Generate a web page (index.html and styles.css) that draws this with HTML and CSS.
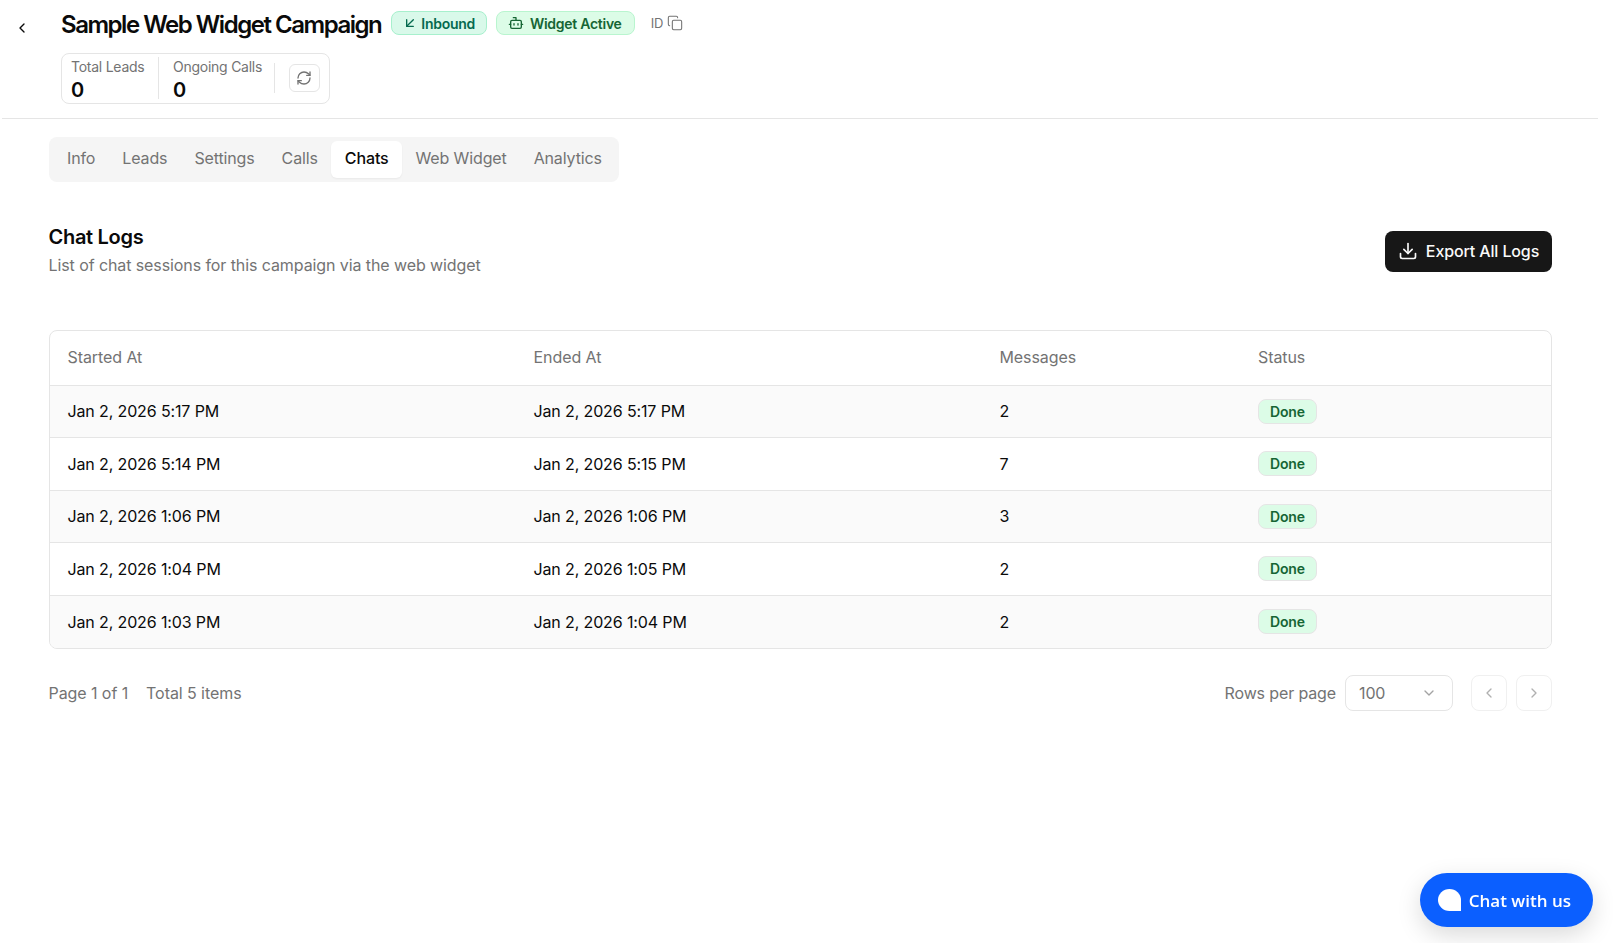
FILE: index.html
```html
<!DOCTYPE html>
<html lang="en">
<head>
  <meta charset="UTF-8">
  <meta name="viewport" content="width=device-width, initial-scale=1.0">
  <title>Sample Web Widget Campaign</title>
  <link rel="stylesheet" href="styles.css">
</head>
<body>
  <div class="page">
    <header class="topbar">
      <button class="back-btn" aria-label="Back">
        <svg width="16" height="16" viewBox="0 0 24 24" class="ico"><path d="m15 18-6-6 6-6"/></svg>
      </button>
      <div class="topbar-main">
        <div class="title-row">
          <h1>Sample Web Widget Campaign</h1>
          <span class="pill pill-teal">
            <svg width="16" height="16" viewBox="0 0 24 24" class="ico"><path d="M17 7 7 17"/><path d="M17 17H7V7"/></svg>
            Inbound
          </span>
          <span class="pill pill-green">
            <svg width="16" height="16" viewBox="0 0 24 24" class="ico"><path d="M12 8V4H8"/><rect x="4" y="8" width="16" height="12" rx="2"/><path d="M2 14h2"/><path d="M20 14h2"/><path d="M15 13v2"/><path d="M9 13v2"/></svg>
            Widget Active
          </span>
          <span class="id-copy">ID
            <svg width="16" height="16" viewBox="0 0 24 24" class="ico"><rect x="8" y="8" width="14" height="14" rx="2"/><path d="M4 16c-1.1 0-2-.9-2-2V4c0-1.1.9-2 2-2h10c1.1 0 2 .9 2 2"/></svg>
          </span>
        </div>
        <div class="stats">
          <div class="stat">
            <span class="stat-label">Total Leads</span>
            <span class="stat-value">0</span>
          </div>
          <div class="stat stat-second">
            <span class="stat-label">Ongoing Calls</span>
            <span class="stat-value">0</span>
          </div>
          <div class="stat-refresh">
            <button class="refresh-btn" aria-label="Refresh">
              <svg width="16" height="16" viewBox="0 0 24 24" class="ico"><path d="M3 12a9 9 0 0 1 9-9 9.75 9.75 0 0 1 6.74 2.74L21 8"/><path d="M21 3v5h-5"/><path d="M21 12a9 9 0 0 1-9 9 9.75 9.75 0 0 1-6.74-2.74L3 16"/><path d="M8 16H3v5"/></svg>
            </button>
          </div>
        </div>
      </div>
    </header>

    <main class="content">
      <nav class="tabs">
        <a class="tab">Info</a>
        <a class="tab">Leads</a>
        <a class="tab">Settings</a>
        <a class="tab">Calls</a>
        <a class="tab active">Chats</a>
        <a class="tab">Web Widget</a>
        <a class="tab">Analytics</a>
      </nav>

      <section class="section-head">
        <div>
          <h2>Chat Logs</h2>
          <p>List of chat sessions for this campaign via the web widget</p>
        </div>
        <button class="export-btn">
          <svg width="20" height="20" viewBox="0 0 24 24" class="ico"><path d="M12 15V3"/><path d="M21 15v4a2 2 0 0 1-2 2H5a2 2 0 0 1-2-2v-4"/><path d="m7 10 5 5 5-5"/></svg>
          Export All Logs
        </button>
      </section>

      <div class="table-wrap">
        <table class="logs">
          <colgroup>
            <col class="col-date"><col class="col-date"><col class="col-msg"><col>
          </colgroup>
          <thead>
            <tr><th>Started At</th><th>Ended At</th><th>Messages</th><th>Status</th></tr>
          </thead>
          <tbody>
            <tr><td>Jan 2, 2026 5:17 PM</td><td>Jan 2, 2026 5:17 PM</td><td>2</td><td><span class="done">Done</span></td></tr>
            <tr><td>Jan 2, 2026 5:14 PM</td><td>Jan 2, 2026 5:15 PM</td><td>7</td><td><span class="done">Done</span></td></tr>
            <tr><td>Jan 2, 2026 1:06 PM</td><td>Jan 2, 2026 1:06 PM</td><td>3</td><td><span class="done">Done</span></td></tr>
            <tr><td>Jan 2, 2026 1:04 PM</td><td>Jan 2, 2026 1:05 PM</td><td>2</td><td><span class="done">Done</span></td></tr>
            <tr><td>Jan 2, 2026 1:03 PM</td><td>Jan 2, 2026 1:04 PM</td><td>2</td><td><span class="done">Done</span></td></tr>
          </tbody>
        </table>
      </div>

      <div class="pager">
        <div class="pager-info">
          <span>Page 1 of 1</span>
          <span>Total 5 items</span>
        </div>
        <div class="pager-controls">
          <span class="rows-label">Rows per page</span>
          <div class="rows-select">
            <span>100</span>
            <svg width="16" height="16" viewBox="0 0 24 24" class="ico"><path d="m6 9 6 6 6-6"/></svg>
          </div>
          <div class="pager-btns">
            <button class="page-btn" aria-label="Previous"><svg width="16" height="16" viewBox="0 0 24 24" class="ico"><path d="m15 18-6-6 6-6"/></svg></button>
            <button class="page-btn" aria-label="Next"><svg width="16" height="16" viewBox="0 0 24 24" class="ico"><path d="m9 18 6-6-6-6"/></svg></button>
          </div>
        </div>
      </div>
    </main>
  </div>

  <button class="chat-launcher"><span class="chat-bubble"></span>Chat with us</button>
</body>
</html>
```

FILE: styles.css
```css
* {
  box-sizing: border-box;
}
body {
  margin: 0;
  background: #fff;
  color: #0a0a0a;
  font-family: Inter, 'Liberation Sans', sans-serif;
  font-size: 16px;
  letter-spacing: -0.13px;
}
button {
  font-family: inherit;
  letter-spacing: inherit;
  cursor: pointer;
}
.ico {
  fill: none;
  stroke: currentColor;
  stroke-width: 2;
  stroke-linecap: round;
  stroke-linejoin: round;
  flex-shrink: 0;
}
.page {
  margin: 0 15px 0 2px;
}
.topbar {
  display: flex;
  align-items: flex-start;
  height: 119px;
  padding-top: 9px;
  border-bottom: 1px solid #e5e5e5;
}
.back-btn {
  width: 36px;
  height: 36px;
  margin: 1px 23px 0 0;
  padding: 0 0 0 4px;
  display: flex;
  align-items: center;
  justify-content: center;
  border: none;
  background: none;
  color: #0a0a0a;
}
.topbar-main {
  display: flex;
  flex-direction: column;
  gap: 12px;
}
.title-row {
  display: flex;
  align-items: center;
  gap: 9px;
  height: 32px;
}
.title-row h1 {
  margin: 0 1px 0 0;
  font-size: 24px;
  line-height: 32px;
  font-weight: 600;
  letter-spacing: -1.47px;
}
.pill {
  display: inline-flex;
  align-items: center;
  gap: 6px;
  height: 24px;
  padding: 0 12px 0 11px;
  border-radius: 8px;
  font-size: 14px;
  font-weight: 600;
  letter-spacing: -0.27px;
  position: relative;
  top: -2px;
}
.pill-teal {
  gap: 3px;
  padding: 0 11px 0 10px;
  background: #d9f9ea;
  border: 1px solid #a7f0cd;
  color: #056a4f;
}
.pill-green {
  background: #dcfce7;
  border: 1px solid #b9f5cf;
  color: #166534;
}
.id-copy {
  display: inline-flex;
  align-items: center;
  gap: 4px;
  margin-left: 7px;
  font-size: 13px;
  color: #737373;
  position: relative;
  top: -2px;
}
.id-copy .ico {
  stroke-width: 1.6;
}
.stats {
  display: flex;
  align-items: stretch;
  width: 269px;
  height: 51px;
  padding: 3px 0 4px;
  border: 1px solid #e5e5e5;
  border-radius: 8px;
}
.stat {
  display: flex;
  flex-direction: column;
  padding: 0 0 0 9px;
  width: 97px;
  border-right: 1px solid #e5e5e5;
}
.stat-second {
  width: 115px;
  padding-left: 14px;
  border-right: none;
}
.stat-label {
  font-size: 14px;
  line-height: 20px;
  margin-bottom: 1px;
  color: #737373;
  letter-spacing: -0.25px;
}
.stat-value {
  font-size: 20px;
  line-height: 24px;
  font-weight: 600;
}
.stat-refresh {
  flex: 1;
  display: flex;
  align-items: center;
  justify-content: flex-end;
  padding-right: 9px;
  position: relative;
}
.stat-refresh::before {
  content: "";
  position: absolute;
  left: 0;
  top: 6px;
  bottom: 6px;
  width: 1px;
  background: #e5e5e5;
}
.refresh-btn {
  width: 31px;
  height: 28px;
  padding: 0 1px 0 0;
  display: flex;
  align-items: center;
  justify-content: center;
  background: #fff;
  border: 1px solid #e5e5e5;
  border-radius: 6px;
  color: #737373;
}
.content {
  padding: 18px 46px 0 46.5px;
}
.tabs {
  display: inline-flex;
  align-items: center;
  height: 45px;
  padding: 0 4px 0 5px;
  background: #f5f5f5;
  border-radius: 8px;
}
.tab {
  display: block;
  padding: 0 13.5px;
  height: 37px;
  line-height: 35px;
  color: #737373;
  border-radius: 6px;
}
.tab.active {
  background: #fff;
  color: #0a0a0a;
  font-weight: 500;
  box-shadow: 0 1px 2px rgba(0,0,0,0.05);
}
.section-head {
  display: flex;
  align-items: center;
  justify-content: space-between;
  margin-top: 42px;
}
.section-head h2 {
  margin: 0 0 3px;
  font-size: 20px;
  line-height: 26px;
  font-weight: 600;
  letter-spacing: -0.3px;
}
.section-head p {
  margin: 0;
  line-height: 24px;
  color: #737373;
  letter-spacing: -0.09px;
}
.export-btn {
  display: flex;
  align-items: center;
  justify-content: center;
  gap: 8px;
  width: 167px;
  height: 41px;
  margin-top: 2px;
  padding: 0 0 2px;
  background: #171717;
  color: #fafafa;
  border: none;
  border-radius: 8px;
  font-size: 16px;
  font-weight: 500;
}
.table-wrap {
  margin-top: 53px;
  border: 1px solid #e5e5e5;
  border-radius: 8px;
  overflow: hidden;
}
.logs {
  width: 100%;
  border-collapse: collapse;
  table-layout: fixed;
}
.col-date {
  width: 466px;
}
.col-msg {
  width: 258.5px;
}
.logs th {
  height: 54px;
  padding: 0 18px 2px;
  text-align: left;
  font-weight: 400;
  color: #737373;
  letter-spacing: -0.08px;
  border-bottom: 1px solid #e5e5e5;
}
.logs td {
  height: 52.5px;
  padding: 0 18px;
  border-bottom: 1px solid #e5e5e5;
}
.logs tbody tr:nth-child(odd) {
  background: #fafafa;
}
.logs tbody tr:last-child td {
  border-bottom: none;
}
.done {
  display: inline-block;
  height: 25px;
  line-height: 24px;
  padding: 0 11px;
  background: #dcfce7;
  border: 1px solid #e5e5e5;
  border-radius: 8px;
  color: #166534;
  font-size: 14px;
  font-weight: 600;
  vertical-align: middle;
}
.pager {
  display: flex;
  align-items: center;
  justify-content: space-between;
  margin-top: 26px;
  color: #737373;
}
.pager-info {
  display: flex;
  gap: 18px;
  letter-spacing: -0.07px;
}
.pager-controls {
  display: flex;
  align-items: center;
}
.rows-select {
  display: flex;
  align-items: center;
  justify-content: space-between;
  width: 108px;
  height: 36px;
  margin-left: 9px;
  padding: 0 15px 0 13px;
  border: 1px solid #e5e5e5;
  border-radius: 8px;
}
.rows-select .ico {
  color: #a3a3a3;
}
.pager-btns {
  display: flex;
  gap: 9px;
  margin-left: 18px;
}
.page-btn {
  width: 36px;
  height: 36px;
  padding: 0;
  display: flex;
  align-items: center;
  justify-content: center;
  background: #fff;
  border: 1px solid #f0f0f0;
  border-radius: 8px;
  color: #b0b0b0;
}
.chat-launcher {
  position: fixed;
  right: 20px;
  bottom: 16px;
  display: flex;
  align-items: center;
  gap: 8px;
  height: 54px;
  padding: 0 22px 0 18px;
  background: #0b5fff;
  color: #fff;
  border: none;
  border-radius: 27px;
  font-family: 'Open Sans', sans-serif;
  font-size: 17px;
  font-weight: 600;
  letter-spacing: 0;
  box-shadow: 0 8px 24px rgba(0,0,0,0.15);
}
.chat-bubble {
  width: 23px;
  height: 22px;
  background: #fff;
  border-radius: 50% 50% 0 50%;
}
```
